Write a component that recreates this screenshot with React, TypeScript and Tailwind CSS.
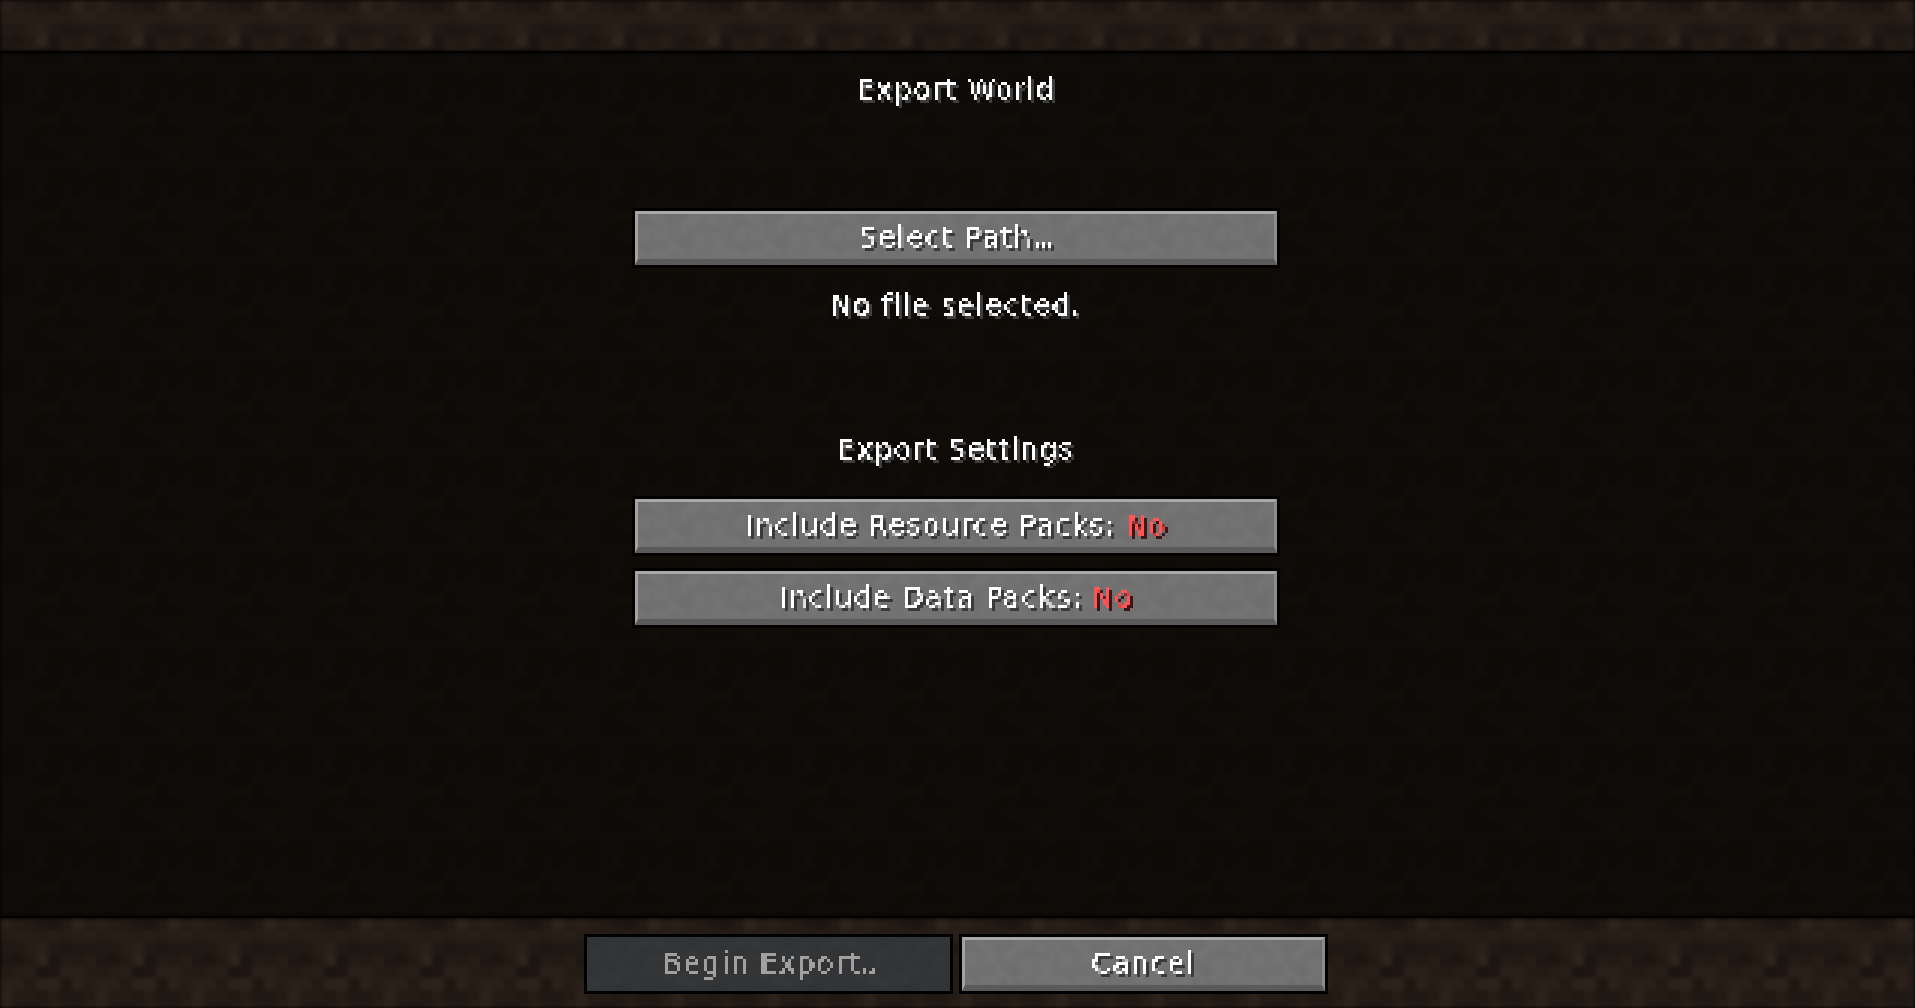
import React from "react";

const ink = "[font-family:'DejaVu_Sans',sans-serif] tracking-[1.5px] [filter:url(#pix)]";

// little seeded generator so the textures stay the same on every render
function makeCells(seed: number, n: number) {
  const cells: { x: number; y: number; v: number }[] = [];
  let s = seed;
  for (let y = 0; y < n; y++) {
    for (let x = 0; x < n; x++) {
      s = (s * 16807) % 2147483647;
      cells.push({ x, y, v: (s % 100) / 100 });
    }
  }
  return cells;
}

const dirt = makeCells(4711, 8);
const stone = makeCells(991, 16);

function Dirt({ id, dim }: { id: string; dim?: boolean }) {
  return (
    <svg className="absolute inset-0 h-full w-full blur-[2px]" aria-hidden="true">
      <defs>
        <pattern id={id} width="96" height="96" patternUnits="userSpaceOnUse">
          {dirt.map((c, i) => (
            <rect
              key={i}
              x={c.x * 12}
              y={c.y * 12}
              width="12"
              height="12"
              fill={`rgb(${Math.round(27 + c.v * 20)},${Math.round(20 + c.v * 16)},${Math.round(15 + c.v * 13)})`}
            />
          ))}
        </pattern>
      </defs>
      <rect width="100%" height="100%" fill={`url(#${id})`} />
      {dim && <rect width="100%" height="100%" fill="#0a0705" fillOpacity="0.8" />}
    </svg>
  );
}

function Stone({ id, base }: { id: string; base?: boolean }) {
  return (
    <svg className="absolute inset-0 h-full w-full blur-[2px]" aria-hidden="true">
      <defs>
        <pattern id={id} width="96" height="96" patternUnits="userSpaceOnUse">
          {stone.map((c, i) => (
            <rect
              key={i}
              x={c.x * 6}
              y={c.y * 6}
              width="6"
              height="6"
              fill={base ? `rgb(${Math.round(48 + c.v * 5)},${Math.round(50 + c.v * 5)},${Math.round(52 + c.v * 5)})` : `rgb(${Math.round(109 + c.v * 9)},${Math.round(109 + c.v * 9)},${Math.round(109 + c.v * 9)})`}
            />
          ))}
        </pattern>
      </defs>
      <rect width="100%" height="100%" fill={`url(#${id})`} />
    </svg>
  );
}

function McButton({ id, children, className, disabled }: { id: string; children: React.ReactNode; className: string; disabled?: boolean }) {
  if (disabled) {
    return (
      <div className={`${className} border-[3px] border-black`}>
        <div className="relative flex h-full items-center justify-center overflow-hidden bg-[#333537]">
          <Stone id={id} base />
          <span className={`relative text-[28px] leading-none text-[#a0a0a0] ${ink}`}>{children}</span>
        </div>
      </div>
    );
  }
  return (
    <div className={`${className} border-[3px] border-black`}>
      <div className="flex h-full border-t-[3px] border-r-[3px] border-b-[6px] border-l-[3px] border-t-[#a9a9a9] border-r-[#8b8b8b] border-b-[#5a5a5a] border-l-[#a2a2a2]">
        <div className="relative flex flex-1 items-center justify-center overflow-hidden bg-[#707070] pt-[3px]">
          <Stone id={id} />
          <span className={`relative text-[28px] leading-none whitespace-nowrap text-white [text-shadow:3px_3px_0_#3a3a3a] ${ink}`}>{children}</span>
        </div>
      </div>
    </div>
  );
}

function Label({ children, className }: { children: React.ReactNode; className: string }) {
  return (
    <div className={`flex justify-center ${className}`}>
      <span className={`text-[28px] leading-none whitespace-nowrap text-white [text-shadow:3px_3px_0_#3f3f3f] ${ink}`}>{children}</span>
    </div>
  );
}

function No() {
  return <span className="ml-[9px] text-[#ff5555] [text-shadow:3px_3px_0_#3f1515]">No</span>;
}

export default function App() {
  return (
    <div className="flex h-[1008px] w-[1915px] flex-col overflow-hidden bg-black">
      <svg className="absolute h-0 w-0" aria-hidden="true">
        <filter id="pix" x="0" y="0" width="100%" height="100%" colorInterpolationFilters="sRGB">
          <feFlood x="1" y="1" width="1" height="1" />
          <feComposite width="3" height="3" />
          <feTile result="grid" />
          <feComposite in="SourceGraphic" in2="grid" operator="in" />
          <feMorphology operator="dilate" radius="1" />
          <feComponentTransfer>
            <feFuncA type="discrete" tableValues="0 1 1 1" />
          </feComponentTransfer>
        </filter>
      </svg>
      <div className="relative h-[51px] shrink-0 overflow-hidden">
        <Dirt id="top" />
      </div>
      <div className="relative flex flex-1 flex-col items-center overflow-hidden border-y-[2px] border-black pr-[3px]">
        <Dirt id="mid" dim />
        <div className="relative flex w-[648px] flex-col">
          <Label className="mt-[23px]">Export World</Label>
          <McButton id="b1" className="mt-[104px] h-[60px]">
            Select Path<span className="tracking-[-2px]">...</span>
          </McButton>
          <Label className="mt-[24px]">No file selected.</Label>
          <Label className="mt-[116px]">Export Settings</Label>
          <McButton id="b2" className="mt-[32px] h-[60px]">
            Include Resource Packs:<No />
          </McButton>
          <McButton id="b3" className="mt-[12px] h-[60px]">
            Include Data Packs:<No />
          </McButton>
        </div>
      </div>
      <div className="relative flex h-[90px] shrink-0 items-start justify-center gap-[6px] overflow-hidden pt-[16px] pr-[3px]">
        <Dirt id="bottom" />
        <McButton id="b4" disabled className="relative h-[60px] w-[369px]">
          Begin Export<span className="tracking-[-2px]">..</span>
        </McButton>
        <McButton id="b5" className="relative h-[60px] w-[369px]">Cancel</McButton>
      </div>
    </div>
  );
}
